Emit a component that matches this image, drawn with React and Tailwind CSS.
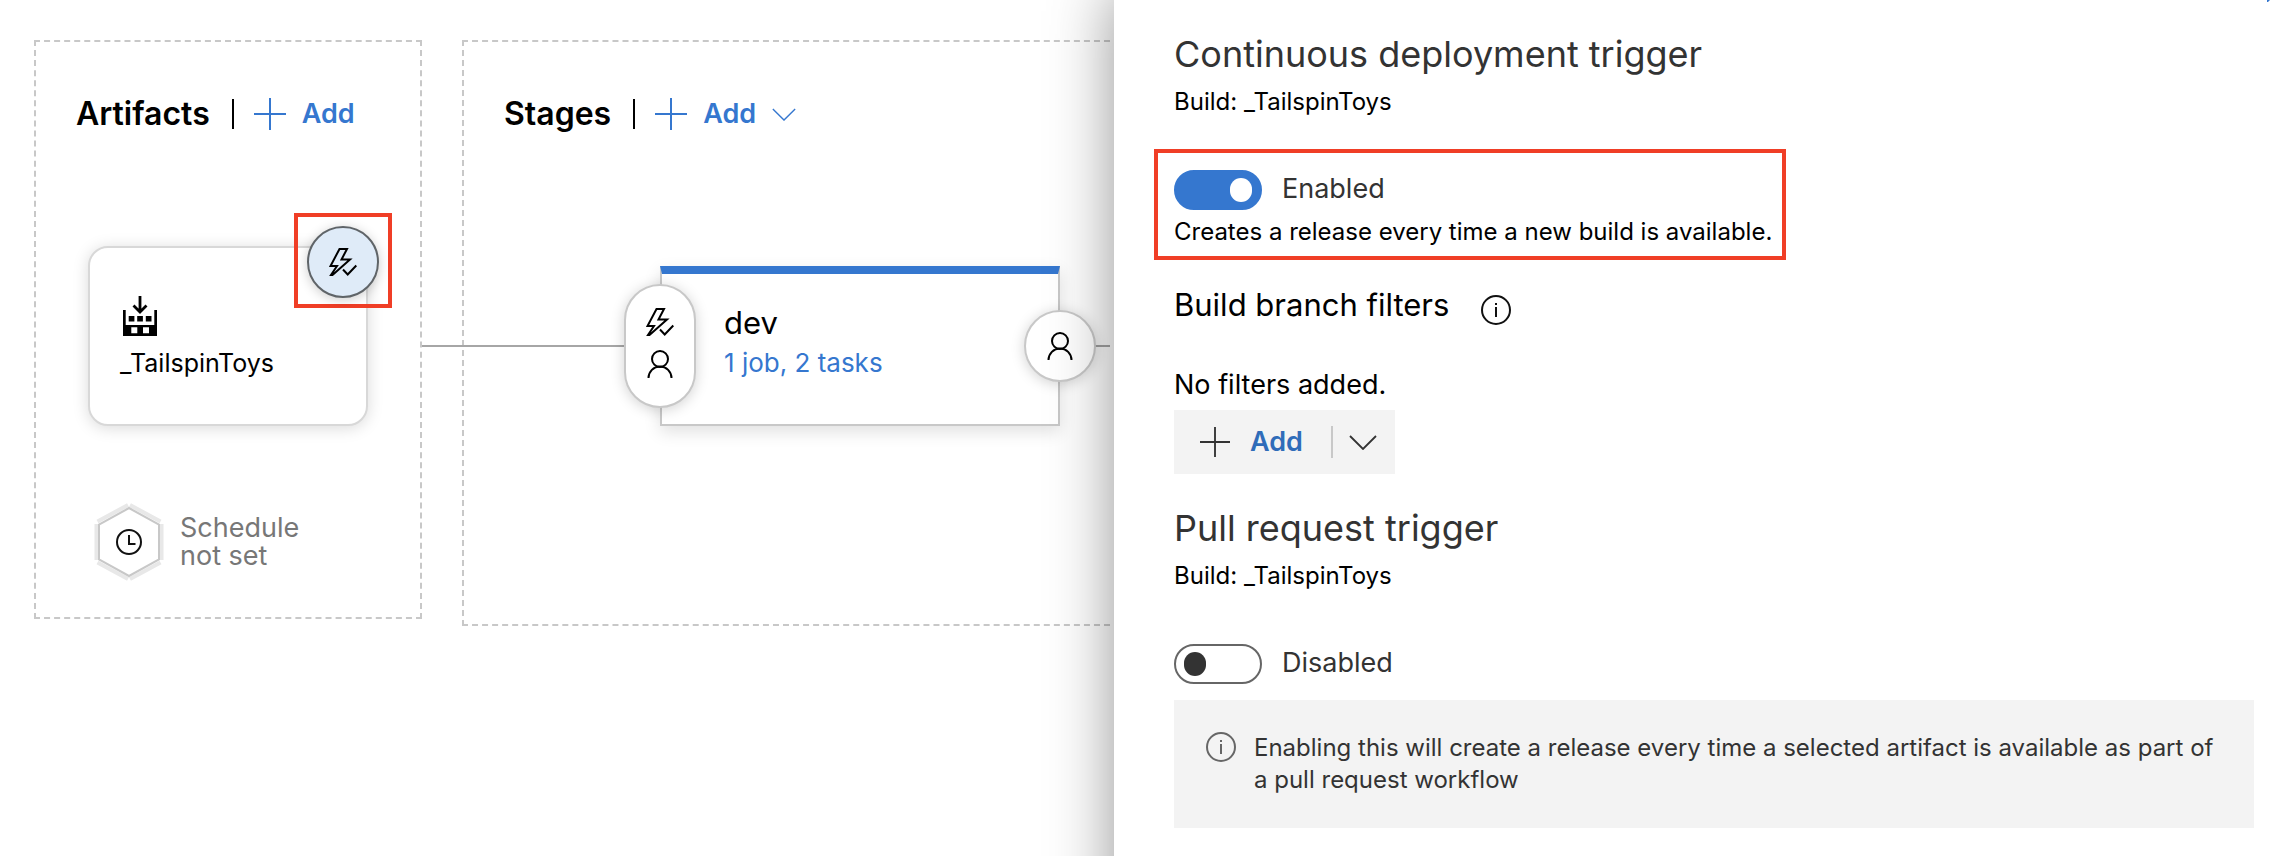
import React, { useState } from "react";

const BoltCheckIcon = () => (
  <svg width="28" height="28" viewBox="0 0 28 28" fill="none" stroke="#000" strokeWidth="2" aria-hidden="true">
    <path d="M10.5 1H18L12.5 11.5H21L3.5 27H2L8 18H1.5Z" />
    <path d="M14 21.5L18.7 26.5L27.3 17.5" />
  </svg>
);

const PersonIcon = () => (
  <svg width="26" height="28" viewBox="0 0 26 28" fill="none" stroke="#000" strokeWidth="2" aria-hidden="true">
    <circle cx="13" cy="9" r="8" />
    <path d="M1.5 28a11.5 11.5 0 0 1 23 0" />
  </svg>
);

const PlusIcon = ({ size }) => (
  <svg width={size} height={size} viewBox="0 0 32 32" stroke="currentColor" strokeWidth="2" aria-hidden="true">
    <path d="M16 0V32M0 16H32" />
  </svg>
);

const ChevronIcon = ({ width, height, strokeWidth }) => (
  <svg width={width} height={height} viewBox="0 0 28 15" fill="none" stroke="currentColor" strokeWidth={strokeWidth} aria-hidden="true">
    <path d="M1 1L14 14L27 1" />
  </svg>
);

const InfoIcon = () => (
  <svg className="shrink-0" width="30" height="30" viewBox="0 0 30 30" fill="none" stroke="currentColor" strokeWidth="2" aria-hidden="true">
    <circle cx="15" cy="15" r="14" />
    <path d="M15 12V22M15 8V10" />
  </svg>
);

const BuildIcon = () => (
  <svg width="34" height="42" viewBox="0 0 34 42" aria-hidden="true">
    <path d="M17 0V16M10.5 9.5L17 16L23.5 9.5" fill="none" stroke="#000" strokeWidth="2.8" />
    <path
      fillRule="evenodd"
      d="M0 14H2.7V29H31.3V14H34V40H0ZM8.3 31.3V37.3H14.3V31.3ZM20 31.3V37.3H26V31.3Z"
    />
    <path d="M5.7 20H11.4V25.5H5.7ZM14.2 20H19.9V25.5H14.2ZM22.8 20H28.5V25.5H22.8Z" />
  </svg>
);

const ScheduleIcon = () => (
  <svg width="70" height="78" viewBox="0 0 70 78" fill="none" aria-hidden="true">
    <path
      d="M2.5 21V57M67.5 21V57M3.5 18.5L34 2M66.5 18.5L36 2M3.5 59.5L34 76M66.5 59.5L36 76"
      stroke="#e8e8e8"
      strokeWidth="4"
    />
    <path d="M35 5L65 21.5V56.5L35 73L5 56.5V21.5Z" stroke="#c8c8c8" strokeWidth="2" />
    <circle cx="35" cy="39" r="12" stroke="#111" strokeWidth="2" />
    <path d="M35 32V41H41.5" stroke="#111" strokeWidth="2" />
  </svg>
);

const SectionHeader = ({ title, menu }) => (
  <div className="flex h-10 items-center">
    <h2 className="text-[32px] leading-10 font-semibold">{title}</h2>
    <span className="ml-[22px] h-[30px] w-0.5 bg-black" />
    <button type="button" className="ml-5 flex items-center gap-4 text-[27px] leading-8 font-semibold text-[#3577cf]">
      <PlusIcon size={32} />
      Add
      {menu && <ChevronIcon width={24} height={13} strokeWidth={1.6} />}
    </button>
  </div>
);

const Toggle = ({ id, initial }) => {
  const [on, setOn] = useState(initial);
  return (
    <div className="flex items-center gap-5">
      <input
        id={id}
        type="checkbox"
        role="switch"
        checked={on}
        onChange={(e) => setOn(e.target.checked)}
        className="flex h-10 w-22 shrink-0 appearance-none items-center rounded-full border-2 border-[#666] bg-white px-2 before:h-6 before:w-[22px] before:rounded-full before:bg-[#333] before:content-[''] checked:justify-end checked:border-[#3577cf] checked:bg-[#3577cf] checked:before:bg-white"
      />
      <label htmlFor={id} className="pb-0.5 text-[27px] leading-8 text-[#333]">
        {on ? "Enabled" : "Disabled"}
      </label>
    </div>
  );
};

const TriggerHeading = ({ title }) => (
  <>
    <h2 className="text-[36px] leading-12 text-[#333]">{title}</h2>
    <p className="mt-2 text-[24px] leading-8">Build: _TailspinToys</p>
  </>
);

const Pipeline = () => (
  <main className="flex min-w-0 items-start gap-10 overflow-hidden pt-10 pr-1 pl-[34px]">
    <section className="w-97 shrink-0 border-2 border-dashed border-[#c8c8c8] pt-[52px] pb-9 pl-10">
      <SectionHeader title="Artifacts" />
      <div className="relative mt-28 ml-3 h-45 w-70 rounded-[20px] border-2 border-[#d8d8d8] bg-white pt-12 pl-[30px] shadow-[0_2px_16px_rgba(0,0,0,0.15)]">
        <div className="pl-[3px]">
          <BuildIcon />
        </div>
        <p className="mt-[9px] text-[25px] leading-8">_TailspinToys</p>
        <div className="absolute -top-[35px] -right-[26px] flex h-[95px] w-[98px] items-center justify-center border-4 border-[#f03e26] pt-0.5">
          <button
            type="button"
            aria-label="Continuous deployment trigger"
            className="flex size-18 items-center justify-center rounded-full border-2 border-[#5f6468] bg-[#dfebf8] shadow-[0_2px_12px_rgba(0,0,0,0.2)]"
          >
            <BoltCheckIcon />
          </button>
        </div>
      </div>
      <div className="mt-[77px] ml-[18px] flex items-center gap-4">
        <ScheduleIcon />
        <p className="text-[27px] leading-7 text-[#777]">
          Schedule
          <br />
          not set
        </p>
      </div>
    </section>

    <section className="relative min-w-0 flex-1 border-2 border-r-0 border-dashed border-[#c8c8c8] pt-[52px] pb-[198px] pl-10">
      <SectionHeader title="Stages" menu />
      <div className="absolute top-[303px] right-0 -left-[42px] h-0.5 bg-[#a6a6a6]" />
      <div className="relative mt-33 ml-39 h-40 w-100 border-2 border-t-8 border-[#c8c8c8] border-t-[#3577cf] bg-white pt-[29px] pl-[62px] shadow-[0_6px_16px_rgba(0,0,0,0.12)]">
        <h3 className="text-[31px] leading-10">dev</h3>
        <a href="#tasks" className="mt-1 block text-[26px] leading-8 text-[#3577cf]">
          1 job, 2 tasks
        </a>
        <button
          type="button"
          aria-label="Pre-deployment conditions"
          className="absolute top-2.5 -left-[38px] flex h-[124px] w-18 flex-col items-center gap-3.5 rounded-full border-2 border-[#c8c8c8] bg-white pt-[22px] shadow-[0_2px_14px_rgba(0,0,0,0.18)]"
        >
          <BoltCheckIcon />
          <PersonIcon />
        </button>
        <button
          type="button"
          aria-label="Post-deployment conditions"
          className="absolute top-9 -right-[38px] flex size-18 items-center justify-center rounded-full border-2 border-[#c8c8c8] bg-white shadow-[0_2px_14px_rgba(0,0,0,0.18)]"
        >
          <PersonIcon />
        </button>
      </div>
    </section>
  </main>
);

const TriggerPanel = () => (
  <aside className="relative bg-white pt-[30px] pr-[30px] pb-7 pl-15 shadow-[50px_40px_60px_50px_rgba(0,0,0,0.42)]">
    <svg className="absolute top-0 right-3.5" width="3" height="2" viewBox="0 0 3 2" aria-hidden="true">
      <path d="M0 0H3L1 2H0Z" fill="#3577cf" />
    </svg>

    <TriggerHeading title="Continuous deployment trigger" />
    <div className="mt-[31px] -ml-5 w-fit border-4 border-[#f03e26] pt-[17px] pr-2.5 pb-2 pl-4">
      <Toggle id="cd-trigger" initial={true} />
      <p className="mt-1.5 text-[24px] leading-8">Creates a release every time a new build is available.</p>
    </div>

    <div className="mt-[25px] flex items-end gap-8">
      <h3 className="text-[31px] leading-10">Build branch filters</h3>
      <button type="button" aria-label="About build branch filters" className="text-[#111]">
        <InfoIcon />
      </button>
    </div>
    <p className="mt-11 text-[27px] leading-8">No filters added.</p>
    <div className="mt-[9px] flex h-16 w-fit items-center bg-[#f3f3f3] text-[#333]">
      <button type="button" className="flex h-16 items-center gap-5 pr-7 pl-[26px] text-[27px] leading-8 font-semibold">
        <PlusIcon size={30} />
        <span className="text-[#2f6cb9]">Add</span>
      </button>
      <span className="h-8 w-0.5 bg-[#c8c8c8]" />
      <button type="button" aria-label="More add options" className="flex h-16 items-center pr-[18px] pl-4">
        <ChevronIcon width={28} height={15} strokeWidth={1.8} />
      </button>
    </div>

    <div className="mt-[30px]">
      <TriggerHeading title="Pull request trigger" />
    </div>
    <div className="mt-13">
      <Toggle id="pr-trigger" initial={false} />
    </div>
    <div className="mt-4 flex items-start gap-[18px] bg-[#f3f3f3] p-8 text-[#333]">
      <span className="text-[#666]">
        <InfoIcon />
      </span>
      <p className="text-[24px] leading-8">
        Enabling this will create a release every time a selected artifact is available as part of a pull request workflow
      </p>
    </div>
  </aside>
);

export default function App() {
  return (
    <div className="grid min-h-screen grid-cols-[1114fr_1170fr] overflow-hidden bg-white font-[Inter,'Liberation_Sans',sans-serif] text-black">
      <Pipeline />
      <TriggerPanel />
    </div>
  );
}
